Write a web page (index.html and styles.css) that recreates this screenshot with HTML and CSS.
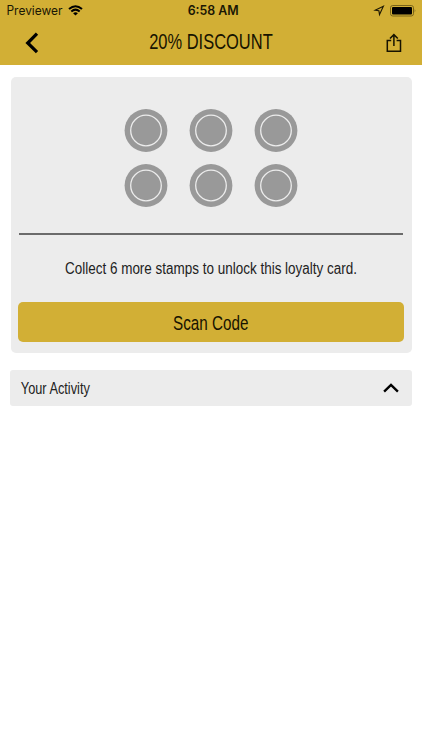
FILE: index.html
```html
<!DOCTYPE html>
<html lang="en">
<head>
<meta charset="utf-8">
<meta name="viewport" content="width=device-width, initial-scale=1">
<title>20% DISCOUNT</title>
<link rel="stylesheet" href="styles.css">
</head>
<body>
<header class="top">
  <div class="status">
    <div class="carrier">
      <svg width="57" height="22"><text class="system" x="0.5" y="15.3" textLength="56" lengthAdjust="spacingAndGlyphs">Previewer</text></svg>
      <svg class="wifi" width="15" height="11" viewBox="0 0 15 11"><path d="M1 4.1Q7.5-1.7 14 4.1M3.3 6.5Q7.5 2.8 11.7 6.5" fill="none" stroke="#000" stroke-width="2"/><path d="M5.1 8.2Q7.5 6.1 9.9 8.2L7.5 10.6Z"/></svg>
    </div>
    <svg width="52" height="22"><text class="system clock" x="2.7" y="15.4" textLength="51" lengthAdjust="spacingAndGlyphs">6:58 AM</text></svg>
    <div class="indicators">
      <svg width="11" height="11" viewBox="0 0 11 11"><path d="M9.4 1.2 1.1 5.2 4.9 5.8 5.5 9.6Z" fill="none" stroke="#1d1804" stroke-width="1.1"/></svg>
      <svg width="27" height="12" viewBox="0 0 27 12"><rect x=".5" y=".5" width="23" height="10.5" rx="2.3" fill="none" stroke="#796419"/><rect x="2" y="2" width="20" height="7.5" rx="1"/><path d="M24.7 4.1Q26.2 5.7 24.7 7.4Z" fill="#796419"/></svg>
    </div>
  </div>
  <nav class="nav">
    <svg width="14" height="22" viewBox="0 0 14 22"><path d="M12 1.6 2.7 11 12 20.2" fill="none" stroke="#000" stroke-width="3.2"/></svg>
    <svg width="125" height="30"><text class="label title" x="-0.8" y="21.4" textLength="123.5" lengthAdjust="spacingAndGlyphs">20% DISCOUNT</text></svg>
    <svg width="16" height="20" viewBox="0 0 16 20"><path d="M5.2 7.4H1.3V18.3H14.5V7.4H10.6M7.9 13V2M4 5.5 7.9 1.6 11.8 5.5" fill="none" stroke="#171300" stroke-width="1.5"/></svg>
  </nav>
</header>
<main>
  <section class="card">
    <div class="stamps">
      <svg class="stamp" viewBox="0 0 43 43"><circle class="disc" cx="21" cy="21.5" r="21.4"/><circle class="ring" cx="21" cy="21.5" r="15.3"/></svg>
      <svg class="stamp" viewBox="0 0 43 43"><circle class="disc" cx="21" cy="21.5" r="21.4"/><circle class="ring" cx="21" cy="21.5" r="15.3"/></svg>
      <svg class="stamp" viewBox="0 0 43 43"><circle class="disc" cx="21" cy="21.5" r="21.4"/><circle class="ring" cx="21" cy="21.5" r="15.3"/></svg>
      <svg class="stamp" viewBox="0 0 43 43"><circle class="disc" cx="21" cy="21.5" r="21.4"/><circle class="ring" cx="21" cy="21.5" r="15.3"/></svg>
      <svg class="stamp" viewBox="0 0 43 43"><circle class="disc" cx="21" cy="21.5" r="21.4"/><circle class="ring" cx="21" cy="21.5" r="15.3"/></svg>
      <svg class="stamp" viewBox="0 0 43 43"><circle class="disc" cx="21" cy="21.5" r="21.4"/><circle class="ring" cx="21" cy="21.5" r="15.3"/></svg>
    </div>
    <hr class="rule">
    <svg class="message" width="293" height="26"><text class="label small" x="0" y="17.1" textLength="292" lengthAdjust="spacingAndGlyphs">Collect 6 more stamps to unlock this loyalty card.</text></svg>
    <button class="scan"><svg width="77" height="28"><text class="label medium" x="0" y="22" textLength="75.5" lengthAdjust="spacingAndGlyphs">Scan Code</text></svg></button>
  </section>
  <section class="activity">
    <svg width="70" height="26"><text class="label small" x="-0.2" y="19.1" textLength="69" lengthAdjust="spacingAndGlyphs">Your Activity</text></svg>
    <svg width="16" height="10" viewBox="0 0 16 10"><path d="M1.1 8.6 8 1.9 14.9 8.6" fill="none" stroke="#000" stroke-width="2.4"/></svg>
  </section>
</main>
</body>
</html>
```
FILE: styles.css
```css
* { box-sizing: border-box; }
body { margin: 0; background: #fff; color: #111; font-family: "Liberation Sans Narrow", "Liberation Sans", sans-serif; }
svg { display: block; flex: none; overflow: visible; }
.top { height: 65.4px; background: #d2af35; }
.status { height: 22px; display: grid; grid-template-columns: 1fr 52px 1fr; align-items: center; padding: 0 6px; }
.carrier { display: flex; align-items: center; gap: 5px; }
.wifi { margin-top: -1px; }
.indicators { display: flex; justify-content: flex-end; align-items: center; gap: 5px; margin-right: -1px; margin-top: -1px; }
.system { font: 12.5px Inter, sans-serif; fill: #1b1704; }
.clock { font-weight: 600; }
.nav { height: 41px; display: flex; align-items: center; justify-content: space-between; padding: 0 20px 0 25px; }
.label { font-family: "Liberation Sans Narrow", "Liberation Sans", sans-serif; fill: #222; }
.title { font-size: 21.5px; fill: #171300; }
.small { font-size: 15.8px; }
.medium { font-size: 19.3px; fill: #171300; }
main { padding: 11.4px 10.5px; }
.card { height: 276.5px; padding: 32px 7.5px 11px; background: #ececec; border-radius: 5px; }
.stamps { display: grid; grid-template-columns: repeat(3, 43px); gap: 12px 22px; justify-content: center; }
.stamp { width: 43px; height: 43px; }
.disc { fill: #999; }
.ring { fill: none; stroke: #ececec; stroke-width: 1.3; }
.rule { height: 2px; margin: 26px 1px 0; border: 0; background: #6b6b6b; }
.message { margin: 22.5px auto 0; }
.scan { display: flex; justify-content: center; align-items: center; width: 100%; height: 40.5px; margin: 18.5px 0 0; padding: 0; border: 0; border-radius: 5px; background: #d2af35; }
.activity { height: 35.5px; margin: 17px -0.5px 0; padding: 0 13px 0 10.5px; display: flex; align-items: center; justify-content: space-between; background: #ececec; border-radius: 3px; }
```
